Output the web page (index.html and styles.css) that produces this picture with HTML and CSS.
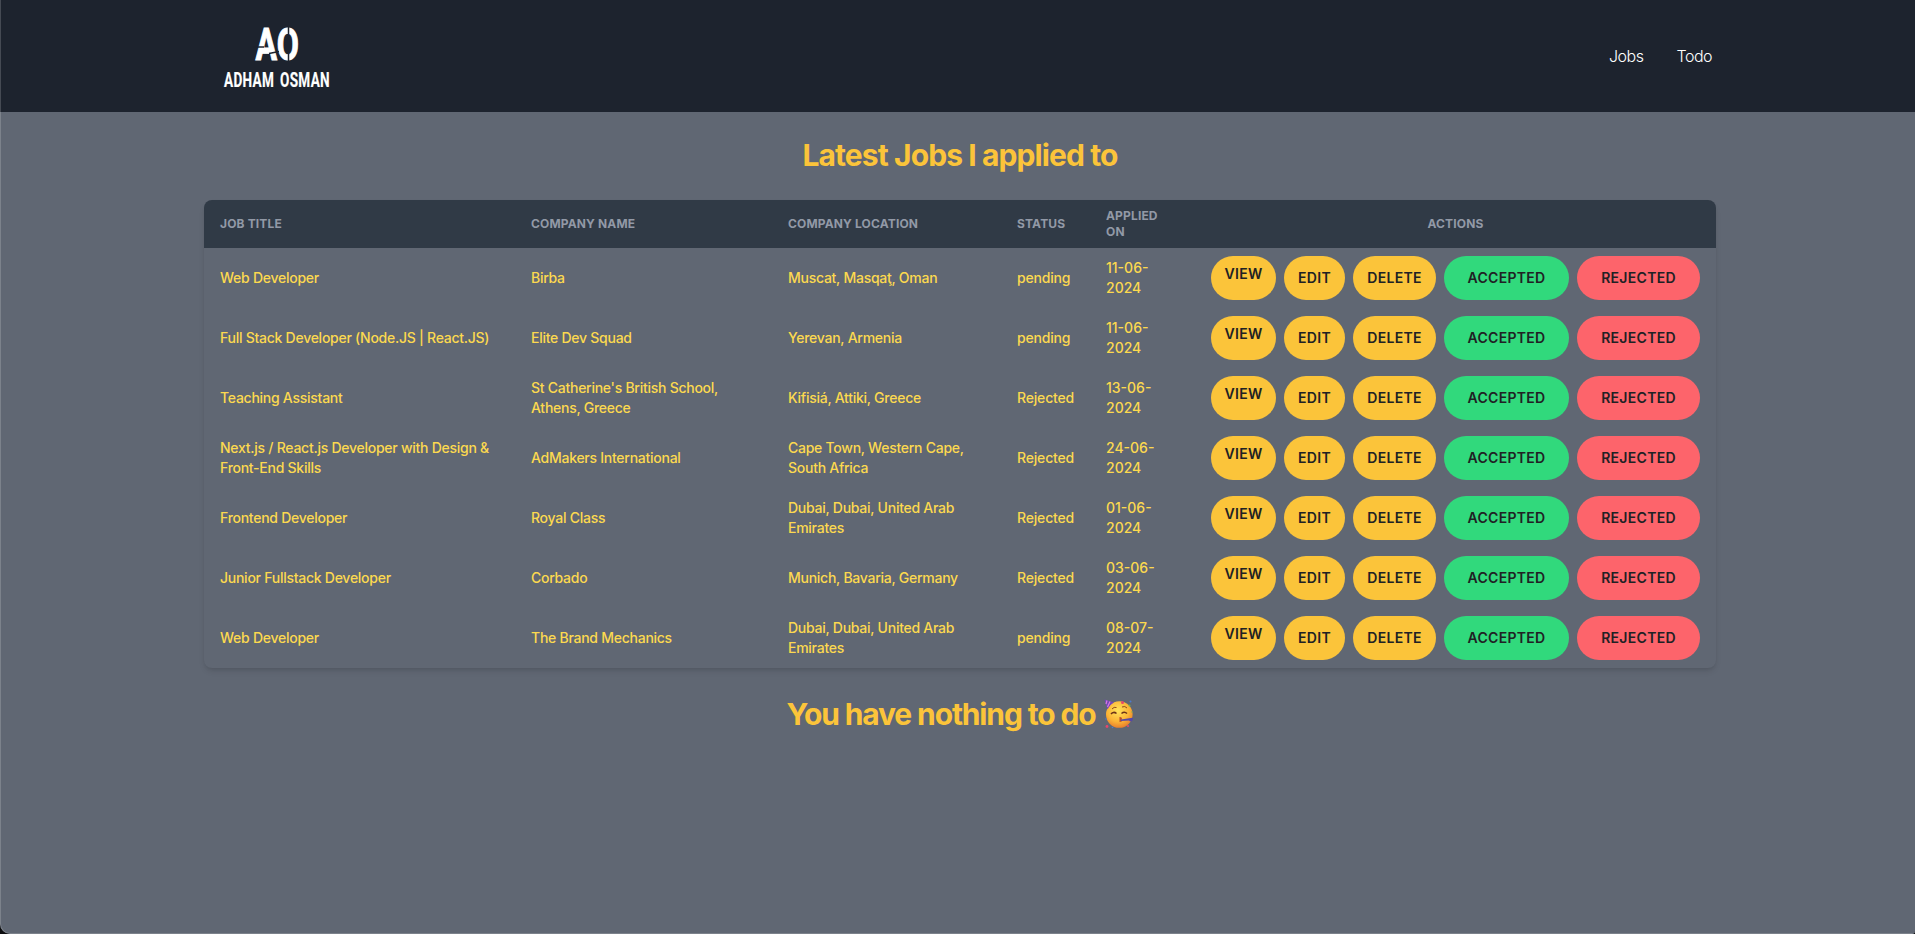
FILE: index.html
```html
<!DOCTYPE html>
<html lang="en">
<head>
<meta charset="utf-8">
<title>Jobs</title>
<link rel="stylesheet" href="styles.css">
</head>
<body>
<div class="window">
<header class="header">
  <div class="container bar">
    <svg class="logo" viewBox="0 0 108 62" role="img" aria-label="Adham Osman">
      <text class="mono" x="32.500" y="34" textLength="43.500" lengthAdjust="spacingAndGlyphs">AO</text>
      <path class="cut" d="M30 21 H41 M46 27.500 L56 25.500 M65.500 0 V8 M65.500 28 V36"/>
      <text class="name" x="1" y="61" textLength="106" lengthAdjust="spacingAndGlyphs">ADHAM OSMAN</text>
    </svg>
    <nav class="nav"><a>Jobs</a><a>Todo</a></nav>
  </div>
</header>
<main class="container">
  <h1 class="title"><span class="t1">Latest Jobs I applied to</span></h1>
  <table class="jobs">
    <colgroup><col class="c1"><col class="c2"><col class="c3"><col class="c4"><col class="c5"><col class="c6"></colgroup>
    <thead><tr><th>Job title</th><th>Company name</th><th>Company location</th><th>Status</th><th class="date">Applied on</th><th class="center">Actions</th></tr></thead>
    <tbody id="rows"></tbody>
  </table>
  <h2 class="title todo"><span class="t2">You have nothing to do</span>
    <svg class="party" viewBox="0 0 30 30">
      <defs><radialGradient id="face" cx=".45" cy=".35" r=".7"><stop offset="0" stop-color="#ffe35c"/><stop offset=".6" stop-color="#fbb436"/><stop offset="1" stop-color="#e5762a"/></radialGradient></defs>
      <circle cx="15.300" cy="15.500" r="13.300" fill="url(#face)"/>
      <path d="M.5.500 L10 3.500 Q6 5.500 3.500 10.500Z" fill="#7548b8"/>
      <path d="M3 1.500 L2 5 M6 2.500 L3.500 8" stroke="#d77be0" stroke-width="1.200"/>
      <path d="M8 10 Q10 7.500 12.500 8.500 M18 8 Q21 6.500 23 9" fill="none" stroke="#8f4a1b" stroke-width="1"/>
      <path d="M7 15 Q9.500 12 12.500 14.500 M17.500 14.500 Q20.500 12 23 14.500" fill="none" stroke="#6b3218" stroke-width="1.500"/>
      <path d="M15.500 18 Q19 18 17.500 20.500 Q19 23 15.500 23" fill="#b84c2d"/>
      <path d="M17 20.500 L27 19 Q30 18 28.500 21.500 Q27 23.500 25 21.500 L17 22Z" fill="#5548a5"/>
      <g fill="#e8466b"><circle cx="18.500" cy="3.500" r="1.500"/><circle cx="3" cy="27.500" r="1.400"/><circle cx="24" cy="27" r="1"/></g>
      <g fill="#4c7bd0"><circle cx="26.500" cy="2.500" r="1"/><circle cx="8.500" cy="28.500" r=".8"/><circle cx="2" cy="20" r=".8"/></g>
      <g fill="#6bb253"><circle cx="25.500" cy="6.500" r="1"/><circle cx="28" cy="13" r=".7"/></g>
    </svg>
  </h2>
</main>
</div>
<script src="app.js"></script>
</body>
</html>
```
FILE: styles.css
```css
* { box-sizing: border-box; }
body { margin: 0; background: #0b0c0e; font-family: Inter, "Liberation Sans", sans-serif; overflow: hidden; }
.window { height: 934px; background: #606773; border-radius: 0 0 3px 10px; border-left: 1px solid #7c828b; border-bottom: 1px solid #7c828b; }
.header { height: 112px; margin-left: -1px; background: #1d232e; border-left: 1px solid #454a53; }
.container { width: 1512px; margin-left: 203px; }
.bar { display: flex; justify-content: space-between; align-items: flex-start; }
.logo { width: 108px; height: 62px; margin: 26px 0 0 19px; overflow: visible; }
.mono { font: 700 44px Roboto, sans-serif; fill: #fff; stroke: #fff; stroke-width: 1; }
.name { font: 700 20px Roboto, sans-serif; fill: #fff; stroke: #fff; stroke-width: .2; word-spacing: 3px; letter-spacing: .5px; }
.cut { stroke: #1d232e; stroke-width: 1.500; fill: none; }
.nav { display: flex; gap: 33px; padding: 44px 4px 0 0; font-size: 16px; line-height: 24px; font-weight: 300; letter-spacing: -.5px; color: #fff; }
.title { display: flex; justify-content: center; align-items: center; gap: 8px; margin: 0; height: 88px; padding-bottom: 3px; font-size: 30px; line-height: 36px; font-weight: 700; letter-spacing: -.9px; color: #fbc43a; }
.todo { height: 92px; padding: 0; letter-spacing: -1.130px; }
.party { width: 30px; height: 30px; }
.jobs { width: 1512px; table-layout: fixed; border-collapse: collapse; border-radius: 8px; overflow: hidden; box-shadow: 0 4px 6px -1px rgba(0,0,0,.1), 0 2px 4px -2px rgba(0,0,0,.1); text-align: left; }
.c1 { width: 311px; } .c2 { width: 257px; } .c3 { width: 229px; } .c4 { width: 89px; } .c5 { width: 105px; } .c6 { width: 521px; }
.jobs th { height: 48px; padding: 0 16px; background: #303a46; color: #9299a6; font-size: 12px; line-height: 16px; font-weight: 700; letter-spacing: .150px; text-transform: uppercase; }
.jobs th.center { text-align: center; }
.jobs th.date { padding-right: 30px; }
.jobs td { height: 60px; padding: 0 16px; color: #fcd94f; font-size: 14px; line-height: 20px; font-weight: 500; letter-spacing: -.260px; }
.jobs td:nth-child(4) { letter-spacing: -.180px; }
.jobs td:nth-child(5) { padding-right: 40px; letter-spacing: 0; }
.jobs td:last-child { padding-right: 0; }
.actions { display: flex; gap: 8px; }
.btn { display: flex; align-items: center; justify-content: center; height: 44px; border-radius: 22px; background: #fbc43a; color: #202124; font-size: 14px; line-height: 20px; font-weight: 600; letter-spacing: .300px; }
.view { width: 65px; padding-bottom: 8px; } .edit { width: 61px; } .delete { width: 83px; }
.accepted { width: 125px; background: #31d97c; } .rejected { width: 123px; background: #fd646b; }
```
FILE: app.js
```javascript
const jobs = [
  ["Web Developer", "Birba", "Muscat, Masqaţ, Oman", "pending", "11-06-2024"],
  ["Full Stack Developer (Node.JS | React.JS)", "Elite Dev Squad", "Yerevan, Armenia", "pending", "11-06-2024"],
  ["Teaching Assistant", "St Catherine's British School, Athens, Greece", "Kifisiá, Attiki, Greece", "Rejected", "13-06-2024"],
  ["Next.js / React.js Developer with Design & Front-End Skills", "AdMakers International", "Cape Town, Western Cape, South Africa", "Rejected", "24-06-2024"],
  ["Frontend Developer", "Royal Class", "Dubai, Dubai, United Arab Emirates", "Rejected", "01-06-2024"],
  ["Junior Fullstack Developer", "Corbado", "Munich, Bavaria, Germany", "Rejected", "03-06-2024"],
  ["Web Developer", "The Brand Mechanics", "Dubai, Dubai, United Arab Emirates", "pending", "08-07-2024"]
];
const body = document.getElementById("rows");
for (const job of jobs) {
  const tr = body.insertRow();
  for (const value of job) tr.insertCell().textContent = value;
  const actions = document.createElement("div");
  actions.className = "actions";
  for (const name of ["view", "edit", "delete", "accepted", "rejected"]) {
    const button = document.createElement("a");
    button.className = "btn " + name;
    button.textContent = name.toUpperCase();
    actions.append(button);
  }
  tr.insertCell().append(actions);
}
```
